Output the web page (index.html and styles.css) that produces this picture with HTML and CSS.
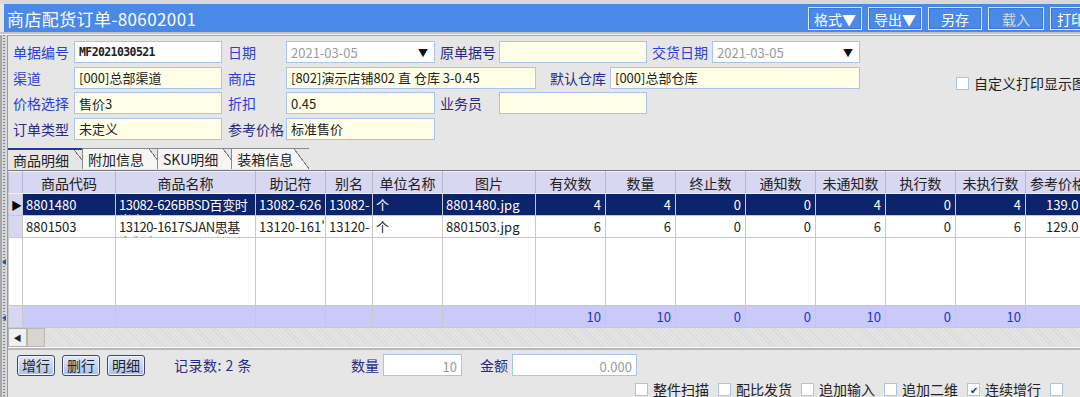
FILE: index.html
```html
<!DOCTYPE html>
<html lang="zh-CN">
<head>
    <meta charset="UTF-8">
    <title>商店配货订单</title>
    <link rel="stylesheet" href="styles.css">
</head>
<body>

<div class="topstrip"></div>
<div class="titlebar">
    <span class="title">商店配货订单-80602001</span>
    <div class="tbtns">
        <span class="tbtn w54">格式▼</span>
        <span class="tbtn w54">导出▼</span>
        <span class="tbtn w54">另存</span>
        <span class="tbtn w56 off">载入</span>
        <span class="tbtn w56 lead">打印</span>
    </div>
</div>
<div class="titlesep"></div>

<div class="content">
    <div class="splitter"><span class="mark m1"></span><span class="mark m2"></span></div>
    <div class="main">

        <!-- 表头信息 -->
        <div class="form">
            <div class="fields">
                <div class="frow">
                    <span class="lbl req w61">单据编号</span>
                    <span class="inp white w148 code">MF2021030521</span>
                    <span class="lbl req w58 ml6">日期</span>
                    <span class="inp white w149 date">2021-03-05<i>▼</i></span>
                    <span class="lbl w59 ml5">原单据号</span>
                    <span class="inp w148"></span>
                    <span class="lbl req w60 ml5">交货日期</span>
                    <span class="inp white w148 date">2021-03-05<i>▼</i></span>
                </div>
                <div class="frow">
                    <span class="lbl req w61">渠道</span>
                    <span class="inp w148">[000]总部渠道</span>
                    <span class="lbl req w58 ml6">商店</span>
                    <span class="inp w250">[802]演示店铺802 直 仓库 3-0.45</span>
                    <span class="lbl w60 ml14">默认仓库</span>
                    <span class="inp w250">[000]总部仓库</span>
                </div>
                <div class="frow">
                    <span class="lbl req w61">价格选择</span>
                    <span class="inp w148">售价3</span>
                    <span class="lbl req w58 ml6">折扣</span>
                    <span class="inp w149">0.45</span>
                    <span class="lbl w59 ml5">业务员</span>
                    <span class="inp w148"></span>
                </div>
                <div class="frow">
                    <span class="lbl w61">订单类型</span>
                    <span class="inp w148">未定义</span>
                    <span class="lbl w58 ml6">参考价格</span>
                    <span class="inp w149">标准售价</span>
                </div>
            </div>
            <label class="chk side"><span class="box"></span>自定义打印显示图</label>
        </div>

        <!-- 页签 -->
        <div class="tabs">
            <span class="tab active">商品明细</span>
            <span class="tab">附加信息</span>
            <span class="tab">SKU明细</span>
            <span class="tab">装箱信息</span>
        </div>

        <!-- 明细表格 -->
        <div class="grid">
            <table>
                <colgroup>
                    <col style="width:14px"><col style="width:93px"><col style="width:140px">
                    <col style="width:70px"><col style="width:47px"><col style="width:70px">
                    <col style="width:93px"><col style="width:70px"><col style="width:70px">
                    <col style="width:70px"><col style="width:70px"><col style="width:70px">
                    <col style="width:70px"><col style="width:70px"><col style="width:60px">
                </colgroup>
                <tr class="head">
                    <th></th><th>商品代码</th><th>商品名称</th><th>助记符</th><th>别名</th>
                    <th>单位名称</th><th>图片</th><th>有效数</th><th>数量</th><th>终止数</th>
                    <th>通知数</th><th>未通知数</th><th>执行数</th><th>未执行数</th><th class="last">参考价格</th>
                </tr>
                <tr class="sel">
                    <td class="ind">▶</td><td>8801480</td>
                    <td><div class="wrap">13082-626BBSD百变时尚文公仔</div></td>
                    <td>13082-626</td><td>13082-</td><td>个</td><td>8801480.jpg</td>
                    <td class="num">4</td><td class="num">4</td><td class="num">0</td><td class="num">0</td>
                    <td class="num">4</td><td class="num">0</td><td class="num">4</td><td class="num last">139.0</td>
                </tr>
                <tr>
                    <td class="ind"></td><td>8801503</td>
                    <td><div class="wrap">13120-1617SJAN思基宝积木玩具</div></td>
                    <td>13120-161'</td><td>13120-</td><td>个</td><td>8801503.jpg</td>
                    <td class="num">6</td><td class="num">6</td><td class="num">0</td><td class="num">0</td>
                    <td class="num">6</td><td class="num">0</td><td class="num">6</td><td class="num last">129.0</td>
                </tr>
                <tr class="filler">
                    <td></td><td></td><td></td><td></td><td></td><td></td><td></td><td></td>
                    <td></td><td></td><td></td><td></td><td></td><td></td><td></td>
                </tr>
                <tr class="total">
                    <td class="ind"></td><td></td><td></td><td></td><td></td><td></td><td></td>
                    <td class="num">10</td><td class="num">10</td><td class="num">0</td><td class="num">0</td>
                    <td class="num">10</td><td class="num">0</td><td class="num">10</td><td></td>
                </tr>
            </table>
        </div>
        <div class="hscroll">
            <span class="sbtn">◀</span><span class="thumb"></span>
        </div>

        <!-- 底部操作区 -->
        <div class="bottom">
            <div class="brow">
                <span class="btn">增行</span>
                <span class="btn">删行</span>
                <span class="btn">明细</span>
                <span class="count">记录数: 2 条</span>
                <span class="blbl">数量</span>
                <span class="binp w79">10</span>
                <span class="blbl ml18">金额</span>
                <span class="binp w125">0.000</span>
            </div>
            <div class="crow">
                <label class="chk"><span class="box"></span>整件扫描</label>
                <label class="chk"><span class="box"></span>配比发货</label>
                <label class="chk"><span class="box"></span>追加输入</label>
                <label class="chk"><span class="box"></span>追加二维</label>
                <label class="chk"><span class="box on">✔</span>连续增行</label>
                <label class="chk"><span class="box"></span></label>
            </div>
        </div>

    </div>
</div>

</body>
</html>
```

FILE: styles.css
```css
* {
    box-sizing: border-box;
}
body {
    margin: 0;
    width: 1080px;
    height: 397px;
    overflow: hidden;
    background-color: #e6e6e6;
    font-family: "Noto Sans CJK SC", "Liberation Sans", sans-serif;
    font-size: 13px;
    color: #222;
}

/* 标题栏 */
.topstrip {
    height: 4px;
    background-color: #d9d9d9;
}
.titlebar {
    height: 28px;
    margin-left: 4px;
    background-color: #4a89e8;
    display: flex;
    align-items: center;
    padding-left: 3px;
    overflow: hidden;
}
.title {
    color: #fff;
    font-size: 17px;
    letter-spacing: 0.4px;
    flex: 1;
}
.tbtns {
    display: flex;
    gap: 6px;
    align-self: flex-start;
    margin-top: 3px;
    margin-right: -26px;
}
.tbtn {
    height: 23px;
    border: 1px solid #dce8fc;
    box-shadow: inset 0 0 0 1px #3d78d8;
    color: #fff;
    font-size: 14px;
    display: flex;
    align-items: center;
    justify-content: center;
}
.tbtn.off {
    color: #d8dce4;
}
.tbtn.lead {
    justify-content: flex-start;
    padding-left: 6px;
}
.w54 { width: 54px; }
.w56 { width: 56px; }
.titlesep {
    height: 3px;
    background-color: #c4c4c4;
    border-bottom: 1px solid #f4f4f4;
}

.content {
    display: flex;
    height: 362px;
}
.splitter {
    width: 8px;
    background-color: #d8d8d8;
    border-left: 2px solid #a8a8a8;
    border-right: 1px solid #9a9a9a;
    position: relative;
}
.splitter::before {
    content: "";
    position: absolute;
    left: 1px;
    top: 0;
    bottom: 0;
    width: 2px;
    background: repeating-linear-gradient(#6f86ad 0 1px, transparent 1px 3px);
}
.mark {
    position: absolute;
    left: 0;
    width: 0;
    height: 0;
    border-top: 3px solid transparent;
    border-bottom: 3px solid transparent;
    border-right: 4px solid #2c55b0;
}
.m1 { top: 224px; }
.m2 { top: 280px; }
.main {
    flex: 1;
    min-width: 0;
    display: flex;
    flex-direction: column;
    overflow: hidden;
}
.form, .tabs, .grid, .hscroll {
    flex-shrink: 0;
}

/* 表头 */
.form {
    height: 111px;
    border-top: 1px solid #a8a8a8;
    padding: 5px 0 0 5px;
    display: flex;
}
.fields {
    display: flex;
    flex-direction: column;
    gap: 3.6px;
}
.frow {
    display: flex;
    height: 22px;
    align-items: center;
}
.lbl {
    color: #2b2a8a;
    font-size: 14px;
    white-space: nowrap;
}
.lbl.req {
    color: #2c3fd6;
}
.inp {
    height: 22px;
    border: 1px solid #a9c3ec;
    background-color: #ffffe8;
    padding: 0 4px;
    display: flex;
    align-items: center;
    white-space: nowrap;
    overflow: hidden;
    font-size: 13px;
}
.inp.white {
    background-color: #fff;
}
.inp.code {
    font-family: "DejaVu Sans Mono", monospace;
    font-size: 11.5px;
    font-weight: bold;
    letter-spacing: -0.6px;
}
.inp.date {
    color: #9a9a9a;
    justify-content: space-between;
}
.inp.date i {
    font-style: normal;
    color: #111;
    font-size: 10px;
    margin-right: 2px;
}
.w58 { width: 58px; }
.w59 { width: 59px; }
.w60 { width: 60px; }
.w61 { width: 61px; }
.w148 { width: 148px; }
.w149 { width: 149px; }
.w250 { width: 250px; }
.ml5 { margin-left: 5px; }
.ml6 { margin-left: 6px; }
.ml14 { margin-left: 14px; }
.ml18 { margin-left: 18px; }

.chk {
    display: flex;
    align-items: center;
    gap: 5px;
    font-size: 14px;
    line-height: 17px;
    color: #222;
    white-space: nowrap;
}
.box {
    width: 13px;
    height: 13px;
    background-color: #fff;
    border: 1px solid #a9c3ec;
    display: flex;
    align-items: center;
    justify-content: center;
    font-size: 10px;
    color: #1c2f8c;
}
.chk.side {
    align-self: flex-start;
    margin: 34px 0 0 96px;
}

/* 页签 */
.tabs {
    height: 24px;
    display: flex;
    align-items: flex-end;
    padding-bottom: 1px;
}
.tab {
    height: 21px;
    padding: 0 20px 0 5px;
    margin-right: -7px;
    font-size: 14px;
    line-height: 20px;
    border-left: 1px solid #8a8a8a;
    border-top: 1px solid #8a8a8a;
    background: linear-gradient(to top right, #f6f6f6 48%, #777 49%, #777 52%, transparent 53%) right / 15px 100% no-repeat,
        linear-gradient(#f6f6f6, #f6f6f6) left / calc(100% - 15px) 100% no-repeat;
}
.tab:last-child {
    padding-right: 16px;
}
.tab.active {
    border-left: none;
    border-top: 2px solid #233d8c;
    padding-left: 5px;
    background: linear-gradient(to top right, #e6e6e6 48%, #777 49%, #777 52%, transparent 53%) right / 15px 100% no-repeat,
        linear-gradient(#e6e6e6, #e6e6e6) left / calc(100% - 15px) 100% no-repeat;
}

/* 表格 */
.grid {
    height: 158px;
    overflow: hidden;
    border-top: 1px solid #7a7a7a;
    background-color: #fff;
}
table {
    border-collapse: collapse;
    table-layout: fixed;
    width: 1077px;
}
th, td {
    border: 1px solid #c8c8c8;
    padding: 0 3px;
    white-space: nowrap;
    overflow: hidden;
    font-weight: normal;
}
th.last {
    text-align: left;
    padding-left: 4px;
}
.head th {
    height: 22px;
    background-color: #d7d7f1;
    font-size: 14px;
    color: #222;
    border-color: #f0f0f8 #b8b8c8;
}
tr:not(.head) td {
    height: 22px;
}
td.num {
    text-align: right;
    padding-right: 4px;
}
td.num.last {
    text-align: left;
    padding-left: 20px;
}
td.ind {
    background-color: #d7d7f1;
    font-size: 11px;
    padding: 0 0 0 2px;
    color: #000;
}
.wrap {
    white-space: normal;
    line-height: 15px;
    height: 20px;
    padding-top: 2px;
    overflow: hidden;
    word-break: break-all;
    letter-spacing: -0.4px;
}
tr.sel td {
    background-color: #0b246b;
    color: #fff;
    border-top: 1px dotted #c8b878;
    border-bottom: 1px dotted #c8b878;
}
tr.sel td.ind {
    background-color: #d7d7f1;
    color: #000;
}
tr.filler td {
    height: 68px;
}
tr.total td {
    background-color: #c9c9fa;
    color: #2334d0;
    height: 22px;
}
tr.total td.ind {
    background-color: #d7d7f1;
}

.hscroll {
    height: 20px;
    display: flex;
    background-color: #e4e4e4;
    background-image: repeating-linear-gradient(45deg, #dadada 0 1px, transparent 1px 3px);
    border-bottom: 1px solid #f8f8f8;
}
.sbtn {
    width: 19px;
    border: 1px solid #b0b0b0;
    background-color: #f0f0f0;
    font-size: 8px;
    display: flex;
    align-items: center;
    justify-content: center;
}
.thumb {
    width: 18px;
    border: 1px solid #b8b8b8;
    background-color: #d8d4d0;
}

/* 底部 */
.bottom {
    flex: 1;
    border-top: 2px solid #b8b8b8;
    padding: 4px 0 0 9px;
    overflow: hidden;
}
.brow {
    display: flex;
    align-items: center;
    height: 22px;
}
.btn {
    height: 21px;
    padding: 0 4px;
    margin-right: 7px;
    border: 1px solid #3e4968;
    border-radius: 3px;
    background: linear-gradient(#dfe9fb, #a9c0ea);
    box-shadow: inset 0 0 0 1px #eef4ff;
    font-size: 14px;
    display: flex;
    align-items: center;
}
.count {
    margin-left: 22px;
    color: #2b2a8a;
    font-size: 14px;
    letter-spacing: 0.5px;
    width: 177px;
}
.blbl {
    color: #2b2a8a;
    font-size: 14px;
    margin-right: 4px;
}
.binp {
    height: 22px;
    border: 1px solid #a9c3ec;
    background-color: #fff;
    color: #999;
    text-align: right;
    padding: 2px 4px 0 0;
}
.w79 { width: 79px; }
.w125 { width: 125px; }
.crow {
    display: flex;
    gap: 9px;
    margin: 5px 0 0 618px;
}
```
